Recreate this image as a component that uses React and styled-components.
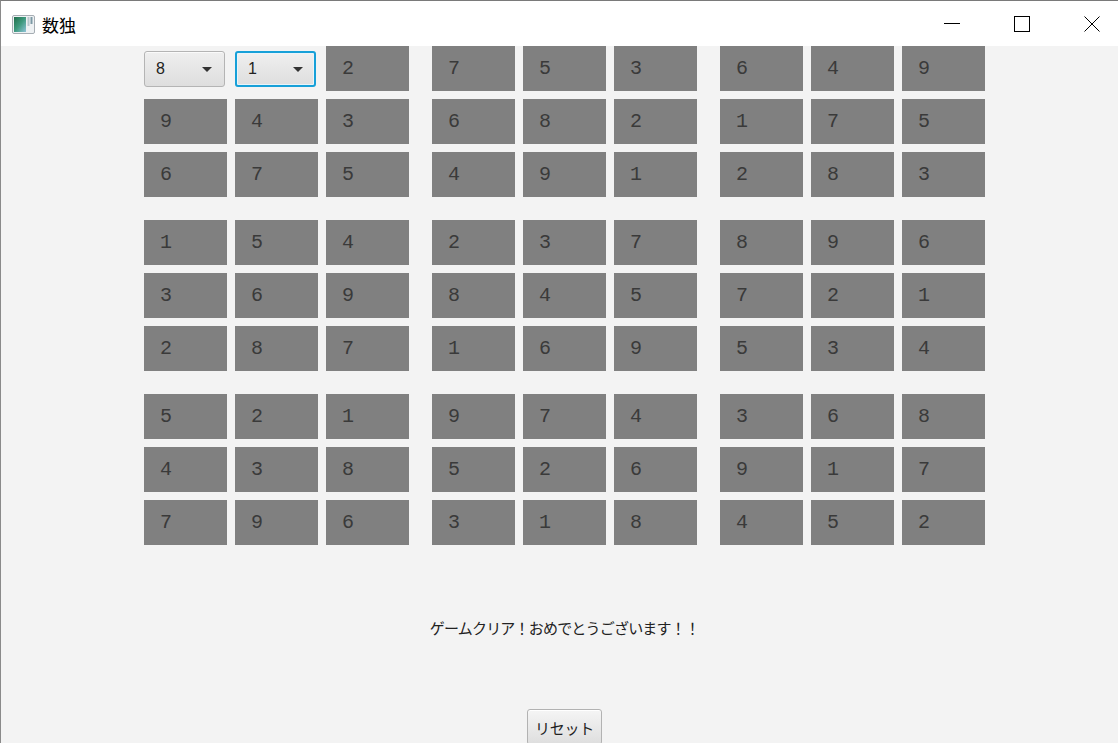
import React from "react";
import styled, { createGlobalStyle } from "styled-components";

const GlobalStyle = createGlobalStyle`
  html, body { margin: 0; padding: 0; background: #ffffff; }
  body { width: 1118px; height: 743px; overflow: hidden; }
  * { box-sizing: border-box; }
`;

const Window = styled.div`
  width: 1118px;
  height: 743px;
  display: flex;
  flex-direction: column;
  border-top: 1px solid #7a7a7a;
  border-left: 1px solid #8a8a8a;
  overflow: hidden;
  font-family: "Noto Sans CJK JP", "Noto Sans", sans-serif;
`;

const TitleBar = styled.div`
  height: 45px;
  flex: none;
  background: #ffffff;
  display: flex;
  align-items: center;
  padding-left: 11px;
  padding-right: 18px;
`;

const AppIcon = styled.svg`
  width: 23px;
  height: 19px;
  flex: none;
  margin-top: 1px;
`;

const Title = styled.span`
  margin-left: 7px;
  font-size: 17px;
  color: #000000;
  font-family: "Noto Sans CJK JP", sans-serif;
  line-height: 20px;
  margin-top: 2px;
`;

const Controls = styled.div`
  margin-left: auto;
  display: flex;
  align-items: center;
  gap: 54px;
  margin-top: 1px;
`;

const ControlIcon = styled.svg`
  width: 16px;
  height: 16px;
  display: block;
`;

const Content = styled.div`
  flex: 1;
  background: #f3f3f3;
  display: flex;
  flex-direction: column;
  align-items: center;
  padding-left: 10px;
`;

const Board = styled.div`
  display: grid;
  grid-template-columns: repeat(3, auto);
  gap: 23px;
`;

const Box = styled.div`
  display: grid;
  grid-template-columns: repeat(3, 83px);
  grid-auto-rows: 45px;
  gap: 8px;
`;

const Cell = styled.div`
  background: #808080;
  display: flex;
  align-items: center;
  padding-left: 16px;
  padding-bottom: 1px;
  font-family: "Liberation Mono", "Courier New", monospace;
  font-size: 20px;
  color: #3a3a3a;
`;

const ComboSlot = styled.div`
  display: flex;
  align-items: center;
`;

const Combo = styled.div`
  width: 81px;
  height: 36px;
  border-radius: 3px;
  border: ${(p) => (p.$focused ? "2px solid #17a0d8" : "1px solid #b4b4b4")};
  background: linear-gradient(#efefef, #dedede);
  box-shadow: ${(p) =>
    p.$focused ? "inset 0 0 0 1px #e8f4fa" : "inset 0 1px 0 #fafafa"};
  display: flex;
  align-items: center;
  padding-left: 11px;
  padding-right: ${(p) => (p.$focused ? "11px" : "12px")};
  font-family: "Liberation Sans", Arial, sans-serif;
  font-size: 16px;
  color: #222222;
`;

const ComboValue = styled.span`
  flex: 1;
  line-height: 18px;
`;

const Arrow = styled.span`
  width: 0;
  height: 0;
  border-left: 5px solid transparent;
  border-right: 5px solid transparent;
  border-top: 5px solid #333333;
  margin-top: 1px;
`;

const Message = styled.div`
  margin-top: 73px;
  font-size: 15px;
  letter-spacing: -0.8px;
  line-height: 20px;
  color: #222222;
  font-family: "Noto Sans CJK JP", sans-serif;
`;

const ResetButton = styled.button`
  margin-top: 71px;
  height: 36px;
  padding: 0 7px;
  border: 1px solid #b2b2b2;
  border-radius: 3px;
  background: linear-gradient(#f5f5f5, #dedede);
  box-shadow: inset 0 1px 0 #ffffff;
  font-family: "Noto Sans CJK JP", sans-serif;
  font-size: 15px;
  letter-spacing: -0.3px;
  color: #222222;
  flex: none;
`;

const rows = [
  [null, null, 2, 7, 5, 3, 6, 4, 9],
  [9, 4, 3, 6, 8, 2, 1, 7, 5],
  [6, 7, 5, 4, 9, 1, 2, 8, 3],
  [1, 5, 4, 2, 3, 7, 8, 9, 6],
  [3, 6, 9, 8, 4, 5, 7, 2, 1],
  [2, 8, 7, 1, 6, 9, 5, 3, 4],
  [5, 2, 1, 9, 7, 4, 3, 6, 8],
  [4, 3, 8, 5, 2, 6, 9, 1, 7],
  [7, 9, 6, 3, 1, 8, 4, 5, 2],
];

const combos = { "0-0": { value: 8, focused: false }, "0-1": { value: 1, focused: true } };

function renderCell(r, c) {
  const key = `${r}-${c}`;
  const combo = combos[key];
  if (combo) {
    return (
      <ComboSlot key={key}>
        <Combo $focused={combo.focused}>
          <ComboValue>{combo.value}</ComboValue>
          <Arrow />
        </Combo>
      </ComboSlot>
    );
  }
  return <Cell key={key}>{rows[r][c]}</Cell>;
}

export default function App() {
  const boxes = [];
  for (let br = 0; br < 3; br++) {
    for (let bc = 0; bc < 3; bc++) {
      const cells = [];
      for (let r = br * 3; r < br * 3 + 3; r++) {
        for (let c = bc * 3; c < bc * 3 + 3; c++) {
          cells.push(renderCell(r, c));
        }
      }
      boxes.push(<Box key={`${br}-${bc}`}>{cells}</Box>);
    }
  }

  return (
    <>
      <GlobalStyle />
      <Window>
        <TitleBar>
          <AppIcon viewBox="0 0 23 19">
            <defs>
              <linearGradient id="ig" x1="0" y1="0" x2="1" y2="1">
                <stop offset="0" stopColor="#1f6e4a" />
                <stop offset="0.5" stopColor="#3f9a7e" />
                <stop offset="1" stopColor="#8fc3d8" />
              </linearGradient>
            </defs>
            <rect x="0.5" y="0.5" width="22" height="18" rx="1.5" fill="#eef1f3" stroke="#a6adb3" />
            <rect x="2" y="2" width="12" height="15" fill="url(#ig)" />
            <rect x="15.5" y="2" width="2" height="9" fill="#b8c6cc" />
            <rect x="18.5" y="2" width="2" height="7" fill="#7d9aa5" />
          </AppIcon>
          <Title>数独</Title>
          <Controls>
            <ControlIcon viewBox="0 0 16 16">
              <line x1="0" y1="7.5" x2="16" y2="7.5" stroke="#000" strokeWidth="1" />
            </ControlIcon>
            <ControlIcon viewBox="0 0 16 16">
              <rect x="0.5" y="0.5" width="15" height="15" fill="none" stroke="#000" strokeWidth="1" />
            </ControlIcon>
            <ControlIcon viewBox="0 0 16 16">
              <line x1="0.5" y1="0.5" x2="15.5" y2="15.5" stroke="#000" strokeWidth="1" />
              <line x1="15.5" y1="0.5" x2="0.5" y2="15.5" stroke="#000" strokeWidth="1" />
            </ControlIcon>
          </Controls>
        </TitleBar>
        <Content>
          <Board>{boxes}</Board>
          <Message>ゲームクリア！おめでとうございます！！</Message>
          <ResetButton>リセット</ResetButton>
        </Content>
      </Window>
    </>
  );
}
